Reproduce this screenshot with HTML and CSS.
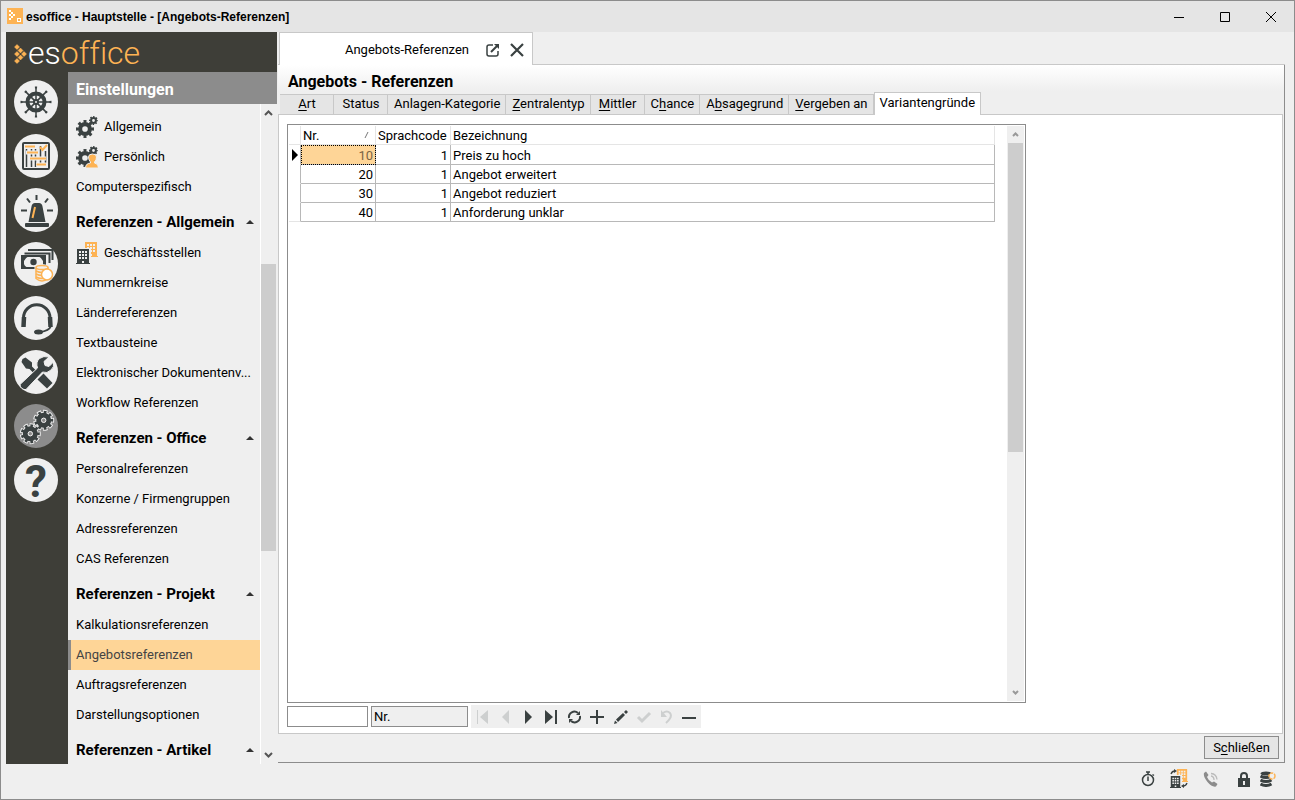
FILE: index.html
```html
<!DOCTYPE html>
<html lang="de">
<head>
  <meta charset="UTF-8" />
  <meta name="viewport" content="width=device-width, initial-scale=1" />
  <title>esoffice - Hauptstelle - [Angebots-Referenzen]</title>
  <link rel="stylesheet" href="styles.css">
</head>
<body>

<!-- shared shapes -->
<svg class="defs" aria-hidden="true">
  <symbol id="gear" viewBox="0 0 24 24">
    <circle cx="12" cy="12" r="6.500" fill="none" stroke="currentColor" stroke-width="5.500" />
    <circle cx="12" cy="12" r="10" fill="none" stroke="currentColor" stroke-width="4" pathLength="16" stroke-dasharray="1 1" stroke-dashoffset="0.5" />
  </symbol>
  <symbol id="building" viewBox="0 0 14 15">
    <path fill="currentColor" fill-rule="evenodd" d="M1 0h12v14h1v1H0v-1h1zM3 2v2h2V2zM6 2v2h2V2zM9 2v2h2V2zM3 5v2h2V5zM6 5v2h2V5zM9 5v2h2V5zM3 8v2h2V8zM6 8v2h2V8zM9 8v2h2V8zM6 12v2h2v-2z" />
  </symbol>
</svg>

<header class="titlebar">
  <svg class="app-icon" width="16" height="16" viewBox="0 0 16 16">
    <rect width="16" height="16" fill="#fdb354" />
    <path fill="#fff" d="M2 2h2v2H2zM4 4h2v2H4zM6 6h2v2H6zM4 8h2v2H4zM2 10h2v2H2zM2 6h2v2H2z" />
    <rect x="10.500" y="10.500" width="3" height="3" fill="none" stroke="#fff" />
  </svg>
  <span class="title">esoffice - Hauptstelle - [Angebots-Referenzen]</span>
  <div class="window-buttons">
    <button type="button" aria-label="Minimieren"><svg width="12" height="12"><path d="M1 6.500h10" /></svg></button>
    <button type="button" aria-label="Maximieren"><svg width="12" height="12"><path d="M1.500 1.500h9v9h-9z" /></svg></button>
    <button type="button" aria-label="Fenster schließen"><svg width="12" height="12"><path d="M1 1l10 10M11 1L1 11" /></svg></button>
  </div>
</header>

<div class="workspace">
  <aside class="sidebar">
    <div class="logo">
      <svg width="14" height="20" viewBox="0 0 14 20" fill="#fdb354">
        <path stroke="#fdb354" stroke-width=".5" d="M3 0.500l2.500 2.500L3 5.500.5 3zM6.500 4L9 6.500 6.500 9 4 6.500zM3 7.500L5.500 10 3 12.500.5 10zM10 7.500l2.500 2.500L10 12.500 7.500 10zM6.500 11L9 13.500 6.500 16 4 13.500zM3 14.500l2.500 2.500L3 19.500 .5 17z" />
      </svg>
      <span class="logo-text"><span class="logo-es">es</span>office</span>
    </div>

    <div class="sidebar-body">
      <div class="rail">
        <button type="button" aria-label="Navigation">
          <svg viewBox="0 0 44 44" fill="none" stroke="currentColor">
            <circle cx="22" cy="22" r="8.500" stroke-width="4" />
            <path stroke-width="1.500" d="M22 8v28M8 22h28M12.100 12.100l19.800 19.800M31.900 12.100L12.100 31.900" />
            <circle cx="22" cy="22" r="14.500" stroke-width="2" pathLength="80" stroke-dasharray="2 8" stroke-dashoffset="1" />
            <circle cx="22" cy="22" r="3" fill="currentColor" stroke="none" />
            <circle cx="22" cy="22" r="1" fill="#efefef" stroke="none" />
          </svg>
        </button>
        <button type="button" aria-label="Planung">
          <svg viewBox="0 0 44 44" fill="none" stroke="currentColor">
            <rect x="9" y="9" width="26" height="26" rx="1" stroke-width="2" />
            <path stroke-width="1.500" d="M12.500 15v18M17.500 15v18M21.500 15v18M26.500 12v20M31.500 17v15" />
            <path stroke="#efefef" stroke-width="4" d="M12 18.500h12M15 24.500h17M22 30.500h11" />
            <path stroke="#fdb354" stroke-width="2" d="M11 12.500h10M13 18.500h11M16 24.500h16M22.500 30.500H32M26 13l2.500 3 4.500-5" />
          </svg>
        </button>
        <button type="button" aria-label="Alarm">
          <svg viewBox="0 0 44 44" fill="currentColor">
            <path d="M14.500 34l3-15.500Q18 15 21 15h4q3 0 3.500 3.500L31.500 34z" />
            <rect x="11" y="35" width="24" height="4" rx="1" />
            <path fill="none" stroke="currentColor" stroke-width="2" d="M22.500 7v5M13 10.500l3 4M34 10.500l-3 4M7 22.500h6M33 22.500h6" />
            <path fill="none" stroke="#fdb354" stroke-width="2" d="M21 19l-2.500 11" />
          </svg>
        </button>
        <button type="button" aria-label="Finanzen">
          <svg viewBox="0 0 44 44" fill="none" stroke="currentColor">
            <path stroke-width="2" d="M14 8h24.500v10M10.500 11.500h25V21" />
            <rect x="8" y="14" width="23" height="12" stroke-width="2" />
            <path fill="currentColor" stroke="none" d="M8 14h7q-4 2-5 5v3q1 3 5 4H8zM31 14h-7q4 2 5 5v3q-1 3-5 4h7z" />
            <circle cx="19.500" cy="20" r="3.200" fill="currentColor" stroke="none" />
            <path fill="#efefef" stroke="#efefef" stroke-width="3" d="M22 25q6-3 12 0v13q-6 3-12 0z" />
            <g stroke="#fdb354" stroke-width="1.500" fill="#efefef">
              <path d="M22 25.500v11q6 5 12 0v-11" />
              <ellipse cx="28" cy="25.500" rx="6" ry="2" />
              <path fill="none" d="M22 29q6 3 12 0M22 32q6 3 12 0M22 35q6 3 12 0" />
              <circle cx="33" cy="32.500" r="5.500" fill="#fff" />
            </g>
          </svg>
        </button>
        <button type="button" aria-label="Service">
          <svg viewBox="0 0 44 44" fill="none" stroke="currentColor">
            <path stroke-width="3" d="M9.500 26V22a13.200 13.200 0 0 1 26.500 0v4" />
            <path stroke-width="4.500" d="M10 21l-.5 10M36 21l.5 10" />
            <path stroke-width="2" d="M37 30q-2 5-11 6" />
            <ellipse cx="24.500" cy="36" rx="4.500" ry="2.500" fill="currentColor" stroke="none" />
          </svg>
        </button>
        <button type="button" aria-label="Werkzeuge">
          <svg viewBox="0 0 44 44" fill="currentColor">
            <path d="M7.500 12l1-3 3-1.500 6.500 5v4l5 5-2.500 2.500-5-5-3.500-.5z" />
            <path d="M23.500 29.500l6-6 9 9.500-5.500 5.500z" />
            <path stroke="#efefef" stroke-width="1" d="M6 34.500L23.500 18q-2-6 2-9.500 4-3 9.500-1.500l-5 4.500 1 4 4 1 4.500-4.500q1 5-2.500 8-4 4-8.500 2L12 39.500q-2 .5-4-1T6 34.500z" />
          </svg>
        </button>
        <button type="button" class="active" aria-label="Einstellungen">
          <svg viewBox="0 0 44 44" fill="none">
            <g stroke="#efefef">
              <circle cx="29.700" cy="16.300" r="7.500" stroke-width="2" />
              <circle cx="29.700" cy="16.300" r="8" stroke-width="5" pathLength="27" stroke-dasharray="2.100 .9" stroke-dashoffset="1.050" />
              <circle cx="16.300" cy="29.700" r="7.500" stroke-width="2" />
              <circle cx="16.300" cy="29.700" r="8" stroke-width="5" pathLength="27" stroke-dasharray="2.100 .9" stroke-dashoffset="1.050" />
            </g>
            <g stroke="currentColor">
              <circle cx="29.700" cy="16.300" r="5" stroke-width="5" />
              <circle cx="29.700" cy="16.300" r="8" stroke-width="3" pathLength="27" stroke-dasharray="1.400 1.600" stroke-dashoffset=".7" />
              <circle cx="16.300" cy="29.700" r="5" stroke-width="5" />
              <circle cx="16.300" cy="29.700" r="8" stroke-width="3" pathLength="27" stroke-dasharray="1.400 1.600" stroke-dashoffset=".7" />
            </g>
            <g stroke="#efefef">
              <circle cx="29.700" cy="16.300" r="2.200" />
              <circle cx="16.300" cy="29.700" r="2.200" />
            </g>
          </svg>
        </button>
        <button type="button" class="help">?</button>
      </div>

      <div class="panel">
        <h2>Einstellungen</h2>
        <div class="panel-body">
          <nav>
            <a href="#">
              <svg width="22" height="22" viewBox="0 0 22 22"><use href="#gear" x="0" y="4" width="18" height="18" /><use href="#gear" x="13" y="0" width="9" height="9" /></svg>
              Allgemein
            </a>
            <a href="#">
              <svg width="22" height="22" viewBox="0 0 22 22">
                <use href="#gear" x="0" y="3" width="18" height="18" /><use href="#gear" x="13" y="0" width="9" height="9" />
                <path fill="#fdb354" stroke="#efefef" d="M12.500 11q0-3 4-3t4 3q0 3-2 5v1q4 .5 4 5h-13q0-4.500 5-5v-1Q12.500 14 12.500 11z" />
              </svg>
              Persönlich
            </a>
            <a href="#">Computerspezifisch</a>
            <h3>Referenzen - Allgemein</h3>
            <a href="#">
              <svg width="22" height="22" viewBox="0 0 22 22"><use class="orange" href="#building" x="8" y="0" width="14" height="15" /><rect x="0" y="6" width="15" height="16" fill="#efefef" /><use href="#building" x="0" y="7" width="14" height="15" /></svg>
              Geschäftsstellen
            </a>
            <a href="#">Nummernkreise</a>
            <a href="#">Länderreferenzen</a>
            <a href="#">Textbausteine</a>
            <a href="#">Elektronischer Dokumentenv...</a>
            <a href="#">Workflow Referenzen</a>
            <h3>Referenzen - Office</h3>
            <a href="#">Personalreferenzen</a>
            <a href="#">Konzerne / Firmengruppen</a>
            <a href="#">Adressreferenzen</a>
            <a href="#">CAS Referenzen</a>
            <h3>Referenzen - Projekt</h3>
            <a href="#">Kalkulationsreferenzen</a>
            <a href="#" class="selected">Angebotsreferenzen</a>
            <a href="#">Auftragsreferenzen</a>
            <a href="#">Darstellungsoptionen</a>
            <h3>Referenzen - Artikel</h3>
          </nav>
          <div class="scrollbar nav-scroll">
            <svg width="9" height="6"><path d="M1 5l3.500-3.500L8 5" /></svg>
            <div class="track"><div class="thumb"></div></div>
            <svg width="9" height="6"><path d="M1 1l3.500 3.500L8 1" /></svg>
          </div>
        </div>
      </div>
    </div>
  </aside>

  <main>
    <div class="doc-tabs">
      <div class="doc-tab">
        <span>Angebots-Referenzen</span>
        <button type="button" aria-label="In neuem Fenster öffnen">
          <svg width="14" height="14" viewBox="0 0 14 14" fill="none" stroke="currentColor">
            <path stroke-width="1.500" d="M7 2H3Q1 2 1 4v7q0 2 2 2h7q2 0 2-2V8" />
            <path stroke-width="2" d="M5 9l6-6" />
            <path fill="currentColor" stroke="none" d="M8 1h5v5z" />
          </svg>
        </button>
        <button type="button" aria-label="Tab schließen">
          <svg width="14" height="14" viewBox="0 0 14 14" fill="none" stroke="currentColor"><path stroke-width="2.200" d="M1 1l12 12M13 1L1 13" /></svg>
        </button>
      </div>
    </div>

    <section class="document">
      <h1>Angebots - Referenzen</h1>
      <div class="tabs">
        <button type="button"><u>A</u>rt</button>
        <button type="button">Status</button>
        <button type="button">Anlagen-Kategorie</button>
        <button type="button"><u>Z</u>entralentyp</button>
        <button type="button"><u>M</u>ittler</button>
        <button type="button">C<u>h</u>ance</button>
        <button type="button">A<u>b</u>sagegrund</button>
        <button type="button"><u>V</u>ergeben an</button>
        <button type="button" class="active">Variantengründe</button>
      </div>

      <div class="content">
        <div class="grid">
          <div class="grid-main">
            <table>
              <colgroup><col class="col-mark"><col class="col-nr"><col class="col-code"><col></colgroup>
              <thead>
                <tr><th></th><th><div class="sorted">Nr.<svg width="5" height="8"><path d="M1 7l3-6" fill="none" stroke="#777" /></svg></div></th><th>Sprachcode</th><th>Bezeichnung</th></tr>
              </thead>
              <tbody>
                <tr><td><svg width="7" height="12"><path d="M1 0l6 6-6 6z" /></svg></td><td class="num current">10</td><td class="num">1</td><td>Preis zu hoch</td></tr>
                <tr><td></td><td class="num">20</td><td class="num">1</td><td>Angebot erweitert</td></tr>
                <tr><td></td><td class="num">30</td><td class="num">1</td><td>Angebot reduziert</td></tr>
                <tr><td></td><td class="num">40</td><td class="num">1</td><td>Anforderung unklar</td></tr>
              </tbody>
            </table>
          </div>
          <div class="scrollbar grid-scroll">
            <svg width="7" height="5"><path d="M1 4l2.500-2.500L6 4" /></svg>
            <div class="track"><div class="thumb"></div></div>
            <svg width="7" height="5"><path d="M1 1l2.500 2.500L6 1" /></svg>
          </div>
        </div>

        <div class="grid-tools">
          <input type="text" class="search" aria-label="Suche">
          <input type="text" class="field" value="Nr." aria-label="Suchfeld" readonly>
          <div class="navigator">
            <button type="button" disabled aria-label="Erster"><svg viewBox="0 0 16 16"><path d="M2 1h1v14H2zM13 1v14L5 8z" /></svg></button>
            <button type="button" disabled aria-label="Voriger"><svg viewBox="0 0 16 16"><path d="M11 1v14L4 8z" /></svg></button>
            <button type="button" aria-label="Nächster"><svg viewBox="0 0 16 16"><path d="M4 1v14l7-7z" /></svg></button>
            <button type="button" aria-label="Letzter"><svg viewBox="0 0 16 16"><path d="M1 1v14l8-7zM11 1h2v14h-2z" /></svg></button>
            <button type="button" aria-label="Aktualisieren"><svg viewBox="0 0 16 16"><path class="line" d="M2 9A5.500 5.500 0 0 1 11 4M13 7A5.500 5.500 0 0 1 4 12" /><path d="M9 6h4V2zM6 10H2v4z" /></svg></button>
            <button type="button" aria-label="Neu"><svg viewBox="0 0 16 16"><path d="M6 1h2v6h6v2H8v6H6V9H0V7h6z" /></svg></button>
            <button type="button" aria-label="Bearbeiten"><svg viewBox="0 0 16 16"><path d="M1 15l1-3.500L4.500 14zM3 10.500L10 4l2 2-7 7zM11 3l2-2 2 2-2 2z" /></svg></button>
            <button type="button" disabled aria-label="Speichern"><svg viewBox="0 0 16 16"><path class="thick" d="M2 8l4 4 8-8" /></svg></button>
            <button type="button" disabled aria-label="Rückgängig"><svg viewBox="0 0 16 16"><path class="line" d="M4 4q4-3 7 0 3 4-4 10" /><path d="M2 1v7h6z" /></svg></button>
            <button type="button" aria-label="Löschen"><svg viewBox="0 0 16 16"><path d="M0 8h14v2H0z" /></svg></button>
          </div>
        </div>
      </div>

      <div class="actions">
        <button type="button">S<u>c</u>hließen</button>
      </div>
    </section>
  </main>
</div>

<footer class="statusbar">
  <svg width="14" height="16" viewBox="0 0 14 16" fill="none" stroke="currentColor">
    <circle cx="7" cy="9" r="5.500" stroke-width="1.500" /><path stroke-width="1.500" d="M7 5.500V10M5 1h4M7 1v3M11.500 3.500l1.500 1" />
  </svg>
  <svg width="18" height="20" viewBox="0 0 18 20">
    <use class="orange" href="#building" x="6" y="0" width="12" height="13" />
    <rect y="6" width="12" height="13" fill="#efefef" />
    <use href="#building" x="0" y="7" width="11" height="12" />
    <path fill="none" stroke="currentColor" stroke-width="1.300" d="M1 5q1-3 4-3M13 17q3 0 4-3" /><path d="M4 0l3 2-3 2zM14 15v4l-3-2z" fill="currentColor" />
  </svg>
  <svg width="16" height="16" viewBox="0 0 16 16" fill="none">
    <path fill="#8c8c8c" d="M1 2l2-1.500L5.500 4 4 6q1 3 5 5.500l2-1 3.500 2.500-1.500 2.500q-4 1-8.500-4.500T1 2z" />
    <path stroke="#bbb" stroke-width="1.300" d="M8 5q3 .5 3 4M8 2.500q5.500.5 6 6" />
  </svg>
  <svg class="i-lock" width="12" height="15" viewBox="0 0 12 15">
    <path fill="none" stroke="currentColor" stroke-width="2" d="M3 7V4q0-3 3-3t3 3v3" /><path fill="currentColor" fill-rule="evenodd" d="M0 6h12v9H0zM5 9v4h2V9z" />
  </svg>
  <svg class="i-db" width="16" height="16" viewBox="0 0 16 16">
    <ellipse cx="6" cy="2.500" rx="5.500" ry="2" fill="currentColor" />
    <path fill="none" stroke="currentColor" stroke-width="3" d="M.5 5q5.500 3 11 0M.5 9q5.500 3 11 0M.5 13q5.500 3 11 0" />
    <circle cx="12" cy="5" r="3" fill="#efefef" stroke="#fdb354" stroke-width="1.500" stroke-dasharray="3 1" />
  </svg>
</footer>

</body>
</html>
```
FILE: styles.css
```css
* {
  box-sizing: border-box;
}
body {
  display: flex;
  flex-direction: column;
  height: 100vh;
  margin: 0;
  border: 1px solid #8c8c8c;
  background: #efefef;
  color: #000;
  font-family: Roboto, sans-serif;
  font-size: 13px;
  line-height: 16px;
  overflow: hidden;
}
h1, h2, h3 {
  margin: 0;
}
button {
  padding: 0;
  border: none;
  background: none;
  color: inherit;
  font: inherit;
}
u {
  text-underline-offset: 2px;
}
svg {
  flex: none;
}
.defs {
  position: absolute;
  width: 0;
  height: 0;
}
.orange {
  color: #fdb354;
}

/* title bar */
.titlebar {
  display: flex;
  align-items: center;
  flex: none;
  height: 31px;
  padding-left: 6px;
  background: #e5e5e5;
}
.app-icon {
  margin-bottom: 2px;
}
.title {
  flex: 1;
  margin-left: 3px;
  font-family: "Liberation Sans", Arial, sans-serif;
  font-size: 12px;
  font-weight: bold;
}
.window-buttons {
  display: flex;
}
.window-buttons button {
  width: 46px;
  height: 30px;
}
.window-buttons svg {
  display: block;
  margin: 0 auto;
  fill: none;
  stroke: #000;
}

.workspace {
  display: flex;
  flex: 1;
  min-height: 0;
  padding: 0 9px 0 5px;
}

/* sidebar */
.sidebar {
  display: flex;
  flex-direction: column;
  flex: none;
  width: 271px;
  background: #3e3e38;
}
.logo {
  display: flex;
  align-items: center;
  flex: none;
  height: 40px;
  padding: 3px 0 0 8px;
  color: #fdb354;
}
.logo-text {
  font-size: 32px;
  font-weight: 300;
  line-height: 34px;
  padding-bottom: 2px;
  font-variant-ligatures: none;
}
.logo-es {
  color: #fff;
}
.sidebar-body {
  display: flex;
  flex: 1;
  min-height: 0;
}
.rail {
  display: flex;
  flex-direction: column;
  align-items: center;
  gap: 10px;
  width: 62px;
  padding: 8px 2px 0 0;
}
.rail button {
  flex: none;
  width: 44px;
  height: 44px;
  border-radius: 50%;
  background: #efefef;
  color: #3a4141;
}
.rail button.active {
  background: #8c8c8c;
}
.rail svg {
  display: block;
}
.rail .help {
  padding-top: 4px;
  font-size: 44px;
  font-weight: bold;
  line-height: 40px;
}
.panel {
  display: flex;
  flex-direction: column;
  flex: 1;
  min-width: 0;
  background: #efefef;
}
.panel h2 {
  flex: none;
  height: 32px;
  padding-left: 8px;
  background: #8c8c8c;
  color: #fff;
  font-size: 16px;
  line-height: 35px;
}
.panel-body {
  display: flex;
  flex: 1;
  min-height: 0;
}
nav {
  flex: 1;
  min-width: 0;
  padding-top: 8px;
  overflow: hidden;
}
nav a {
  display: flex;
  align-items: center;
  gap: 6px;
  height: 30px;
  padding-left: 8px;
  color: #000;
  text-decoration: none;
  white-space: nowrap;
}
nav a svg {
  color: #3a4141;
}
nav a.selected {
  padding-left: 5px;
  border-left: 3px solid #8c8c8c;
  background: #fed597;
  color: #444;
}
nav h3 {
  display: flex;
  align-items: center;
  justify-content: space-between;
  height: 36px;
  padding: 3px 6px 0 8px;
  font-size: 15px;
}
nav h3::after {
  content: "";
  border: 4px solid transparent;
  border-top: none;
  border-bottom-color: #333;
}

/* scrollbars */
.scrollbar {
  display: flex;
  flex-direction: column;
  align-items: center;
  flex: none;
  background: #efefef;
}
.scrollbar svg {
  margin: 6px 0;
  fill: none;
  stroke: #555;
  stroke-width: 2;
}
.scrollbar .track {
  flex: 1;
  width: 100%;
}
.thumb {
  background: #cdcdcd;
}
.nav-scroll {
  width: 17px;
  padding-right: 1px;
  border-left: 1px solid #fff;
}
.nav-scroll .track {
  padding-top: 142px;
}
.nav-scroll .thumb {
  height: 287px;
}
.grid-scroll {
  width: 17px;
}
.grid-scroll svg {
  stroke: #999;
}
.grid-scroll .thumb {
  height: 309px;
  margin: 0 1px;
}

/* document area */
main {
  display: flex;
  flex-direction: column;
  flex: 1;
  min-width: 0;
  padding: 0 0 1px 1px;
}
.doc-tabs {
  flex: none;
  height: 33px;
  padding-left: 1px;
  border-bottom: 1px solid #c8c8c8;
}
.doc-tab {
  display: flex;
  align-items: center;
  justify-content: flex-end;
  gap: 10px;
  width: 254px;
  height: 33px;
  padding: 1px 8px 0 0;
  border: 1px solid #c8c8c8;
  border-bottom: none;
  background: #fff;
}
.doc-tab span {
  margin-right: 7px;
}
.doc-tab button {
  color: #3a4141;
}
.doc-tab svg {
  display: block;
}
.document {
  display: flex;
  flex-direction: column;
  flex: 1;
  min-height: 0;
  border-right: 1px solid #8c8c8c;
  border-bottom: 1px solid #8c8c8c;
  background: linear-gradient(#fff, #efefef 26px);
}
.document h1 {
  flex: none;
  height: 27px;
  padding-left: 10px;
  font-size: 16px;
  line-height: 33px;
}
.tabs {
  display: flex;
  align-items: flex-end;
  flex: none;
  height: 22px;
  padding-left: 2px;
}
.tabs button {
  min-width: 54px;
  height: 20px;
  padding: 0 5px 2px 6px;
  border-top: 1px solid #c8c8c8;
  border-right: 1px solid #c8c8c8;
  background: #e5e5e5;
}
.tabs button.active {
  height: 23px;
  margin-bottom: -1px;
  padding: 0 5px 3px;
  border-left: 1px solid #c8c8c8;
  background: #fff;
  z-index: 1;
}
.content {
  display: flex;
  flex-direction: column;
  flex: 1;
  min-height: 0;
  margin-right: 1px;
  padding: 9px 10px 5px 8px;
  border: 1px solid #c8c8c8;
  background: #fff;
}

/* grid */
.grid {
  display: flex;
  flex: 1;
  width: 75%;
  min-height: 0;
  padding: 1px;
  border: 1px solid #8c8c8c;
}
.grid-main {
  flex: 1;
  padding-right: 12px;
}
table {
  width: 100%;
  border-collapse: separate;
  border-spacing: 0;
  table-layout: fixed;
}
.col-mark {
  width: 12px;
}
.col-nr, .col-code {
  width: 75px;
}
th, td {
  height: 19px;
  padding: 0 2px;
  border-right: 1px solid #b8b8b8;
  border-bottom: 1px solid #b8b8b8;
  line-height: 17px;
  text-align: left;
  white-space: nowrap;
}
th {
  border-color: #e5e5e5;
  font-weight: normal;
}
tbody tr:first-child td {
  height: 20px;
  padding-top: 1px;
}
td:first-child {
  border-bottom-color: #fff;
}
tr:last-child td:first-child {
  border-bottom-color: #e5e5e5;
}
td svg {
  display: block;
}
.sorted {
  display: flex;
  align-items: center;
  justify-content: space-between;
  padding-right: 4px;
}
td.num {
  text-align: right;
}
.current {
  background: #fed597;
  color: #7a6444;
  outline: 1px dotted #000;
  outline-offset: -1px;
}
.grid-tools {
  display: flex;
  align-items: center;
  flex: none;
  gap: 3px;
  margin-top: 2px;
}
.grid-tools input {
  height: 21px;
  padding: 0 2px;
  border: 1px solid #8c8c8c;
  border-radius: 0;
  font: inherit;
}
.search {
  width: 81px;
}
.field {
  width: 97px;
  background: #efefef;
}
.navigator {
  display: flex;
  background: #efefef;
}
.navigator button {
  width: 23px;
  height: 23px;
  color: #3a4141;
}
.navigator button:disabled {
  color: #cdcfcf;
}
.navigator svg {
  display: block;
  width: 16px;
  height: 16px;
  margin: 0 auto;
  fill: currentColor;
}
.navigator .line, .navigator .thick {
  fill: none;
  stroke: currentColor;
  stroke-width: 2;
}
.navigator .thick {
  stroke-width: 3;
}
.actions {
  display: flex;
  justify-content: flex-end;
  flex: none;
  padding: 2px 5px 3px;
}
.actions button {
  width: 75px;
  height: 23px;
  border: 1px solid #8c8c8c;
  background: #e5e5e5;
}

/* status bar */
.statusbar {
  display: flex;
  align-items: center;
  justify-content: flex-end;
  flex: none;
  gap: 15px;
  height: 35px;
  padding: 0 18px 5px 0;
  color: #3a4141;
}
.i-lock {
  margin-left: 4px;
}
.i-db {
  margin-left: -5px;
}
```
